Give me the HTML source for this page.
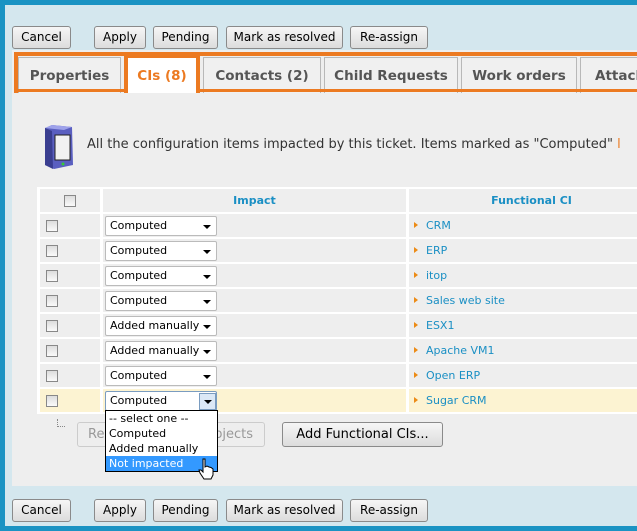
<!DOCTYPE html>
<html><head><style>
*{box-sizing:border-box;margin:0;padding:0}
body{width:637px;height:531px;overflow:hidden;background:#1a93c3;font-family:"DejaVu Sans","Liberation Sans",sans-serif;position:relative}
#in{position:absolute;left:5px;top:5px;width:640px;height:521px;background:#d4e7ee}
.btn{position:absolute;height:23px;border:1px solid #8a8a8a;border-radius:3px;background:linear-gradient(#f6f6f6,#dcdcdc);font-size:12px;color:#000;text-align:center;line-height:21px}
#content{position:absolute;left:12px;top:50px;width:640px;height:436px;background:#eeeeee}
#frame{position:absolute;left:14px;top:52px;width:640px;height:41px;border:4px solid #ec7a21;border-right:none;border-bottom:none;background:#eee}
.tab{position:absolute;top:57px;height:36px;background:#f0f0f0;border:1px solid #b8b8b8;border-bottom:none;font-weight:bold;font-size:13.5px;color:#555;text-align:center;line-height:36px}
.sel{background:#fff;color:#ec7a21;border:4px solid #ec7a21;border-bottom:none;top:54px;height:39px;line-height:36px}
.tl{position:absolute;top:89px;height:3px;background:#ec7a21}
.txt{position:absolute;left:87px;top:137px;font-size:13px;color:#333;white-space:nowrap}
table{position:absolute;left:37px;top:187px;border-collapse:separate;border-spacing:3px 2px;background:#fff;width:620px}
td{background:#eee;height:23px;font-size:11px}
th{background:#eee;height:23px;color:#1a8fc4;font-size:11px;font-weight:bold}
tr.y td{background:#fcf3d2}
.cb{display:inline-block;width:12px;height:12px;border:1px solid #888;background:linear-gradient(#ddd,#fafafa);margin-left:6px;vertical-align:middle}
.sl{display:inline-block;width:112px;height:20px;border:1px solid #bbb;border-radius:2px;background:#fff;margin-left:2px;font-size:11px;line-height:18px;padding-left:4px;position:relative;color:#000}
.sl:after{content:"";position:absolute;right:5px;top:8px;border:4px solid transparent;border-top:4px solid #000;border-bottom:none}
.lk{color:#1a8fc4;font-size:11px;padding-left:5px}
.lk:before{content:"";display:inline-block;border:3px solid transparent;border-left:4px solid #ec8b16;border-right:none;margin-right:8px;vertical-align:1px}
</style></head><body>
<div id="in"></div>
<div class="btn" style="left:12px;top:26px;width:59px">Cancel</div>
<div class="btn" style="left:94px;top:26px;width:52px">Apply</div>
<div class="btn" style="left:153px;top:26px;width:65px">Pending</div>
<div class="btn" style="left:226px;top:26px;width:117px">Mark as resolved</div>
<div class="btn" style="left:350px;top:26px;width:78px">Re-assign</div>
<div id="content"></div>
<div id="frame"></div>
<div class="tab" style="left:18px;width:103px">Properties</div>
<div class="tab sel" style="left:124px;width:76px">CIs (8)</div>
<div class="tab" style="left:203px;width:118px">Contacts (2)</div>
<div class="tab" style="left:324px;width:134px">Child Requests</div>
<div class="tab" style="left:461px;width:116px">Work orders</div>
<div class="tab" style="left:580px;width:80px;text-align:left;padding-left:14px">Attach</div>
<div class="tl" style="left:14px;width:110px"></div>
<div class="tl" style="left:200px;width:440px"></div>
<svg style="position:absolute;left:42px;top:123px" width="34" height="48" viewBox="0 0 34 48"><path d="M3 5 L10 2 L30 4 L31 42 L12 46 L3 42Z" fill="#5a5fc0"/><path d="M3 5 L10 2 L30 4 L22 7Z" fill="#9ea2ea"/><path d="M3 5 L10 8 L11 46 L3 42Z" fill="#3a3e90"/><rect x="13" y="12" width="15" height="25" fill="#f2f2f2" stroke="#222"/><circle cx="21" cy="41" r="1.5" fill="#3c3"/></svg>
<div class="txt">All the configuration items impacted by this ticket. Items marked as "Computed" <span style="color:#ec7a21">l</span></div>
<table>
<tr><th style="width:60px"><span class="cb" style="margin:0"></span></th><th style="width:303px">Impact</th><th>Functional CI</th></tr>
<tr><td><span class="cb"></span></td><td><span class="sl">Computed</span></td><td><span class="lk">CRM</span></td></tr>
<tr><td><span class="cb"></span></td><td><span class="sl">Computed</span></td><td><span class="lk">ERP</span></td></tr>
<tr><td><span class="cb"></span></td><td><span class="sl">Computed</span></td><td><span class="lk">itop</span></td></tr>
<tr><td><span class="cb"></span></td><td><span class="sl">Computed</span></td><td><span class="lk">Sales web site</span></td></tr>
<tr><td><span class="cb"></span></td><td><span class="sl">Added manually</span></td><td><span class="lk">ESX1</span></td></tr>
<tr><td><span class="cb"></span></td><td><span class="sl">Added manually</span></td><td><span class="lk">Apache VM1</span></td></tr>
<tr><td><span class="cb"></span></td><td><span class="sl">Computed</span></td><td><span class="lk">Open ERP</span></td></tr>
<tr class="y"><td><span class="cb"></span></td><td><span class="sl" style="border-color:#7a9cc0">Computed</span></td><td><span class="lk">Sugar CRM</span></td></tr>
</table>
<div style="position:absolute;left:57px;top:419px;width:8px;height:8px;border-left:1px dotted #888;border-bottom:1px dotted #888"></div>
<div class="btn" style="left:77px;top:422px;width:188px;height:25px;color:#999;border-color:#ccc;background:#eee;text-align:left;padding-left:10px;font-size:13px;line-height:23px">Re<span style="margin-left:110px">ojects</span></div>
<div class="btn" style="left:282px;top:422px;width:161px;height:25px;font-size:13px;line-height:23px">Add Functional CIs...</div>
<div style="position:absolute;left:199px;top:393px;width:17px;height:17px;background:#dbe8f6;border:1px solid #7a9cc0"></div>
<div style="position:absolute;left:204px;top:400px;border:4px solid transparent;border-top:4px solid #000;border-bottom:none"></div>
<div style="position:absolute;left:105px;top:410px;width:113px;height:62px;background:#fff;border:1px solid #000;font-size:11px;line-height:15px;color:#000">
<div style="padding-left:3px">-- select one --</div><div style="padding-left:3px">Computed</div><div style="padding-left:3px">Added manually</div><div style="padding-left:3px;background:#3399ff;color:#fff">Not impacted</div></div>
<svg style="position:absolute;left:198px;top:458px" width="18" height="24" viewBox="0 0 18 24"><path d="M5 1 L7 1 L7 9 L9 8 L11 9 L13 9.5 L15 11 L15 17 L13 21 L6 21 L2 15 L1 12 L3 12 L5 14Z" fill="#fff" stroke="#000"/></svg>
<div class="btn" style="left:12px;top:499px;width:59px">Cancel</div>
<div class="btn" style="left:94px;top:499px;width:52px">Apply</div>
<div class="btn" style="left:153px;top:499px;width:65px">Pending</div>
<div class="btn" style="left:226px;top:499px;width:117px">Mark as resolved</div>
<div class="btn" style="left:350px;top:499px;width:78px">Re-assign</div>
</body></html>
